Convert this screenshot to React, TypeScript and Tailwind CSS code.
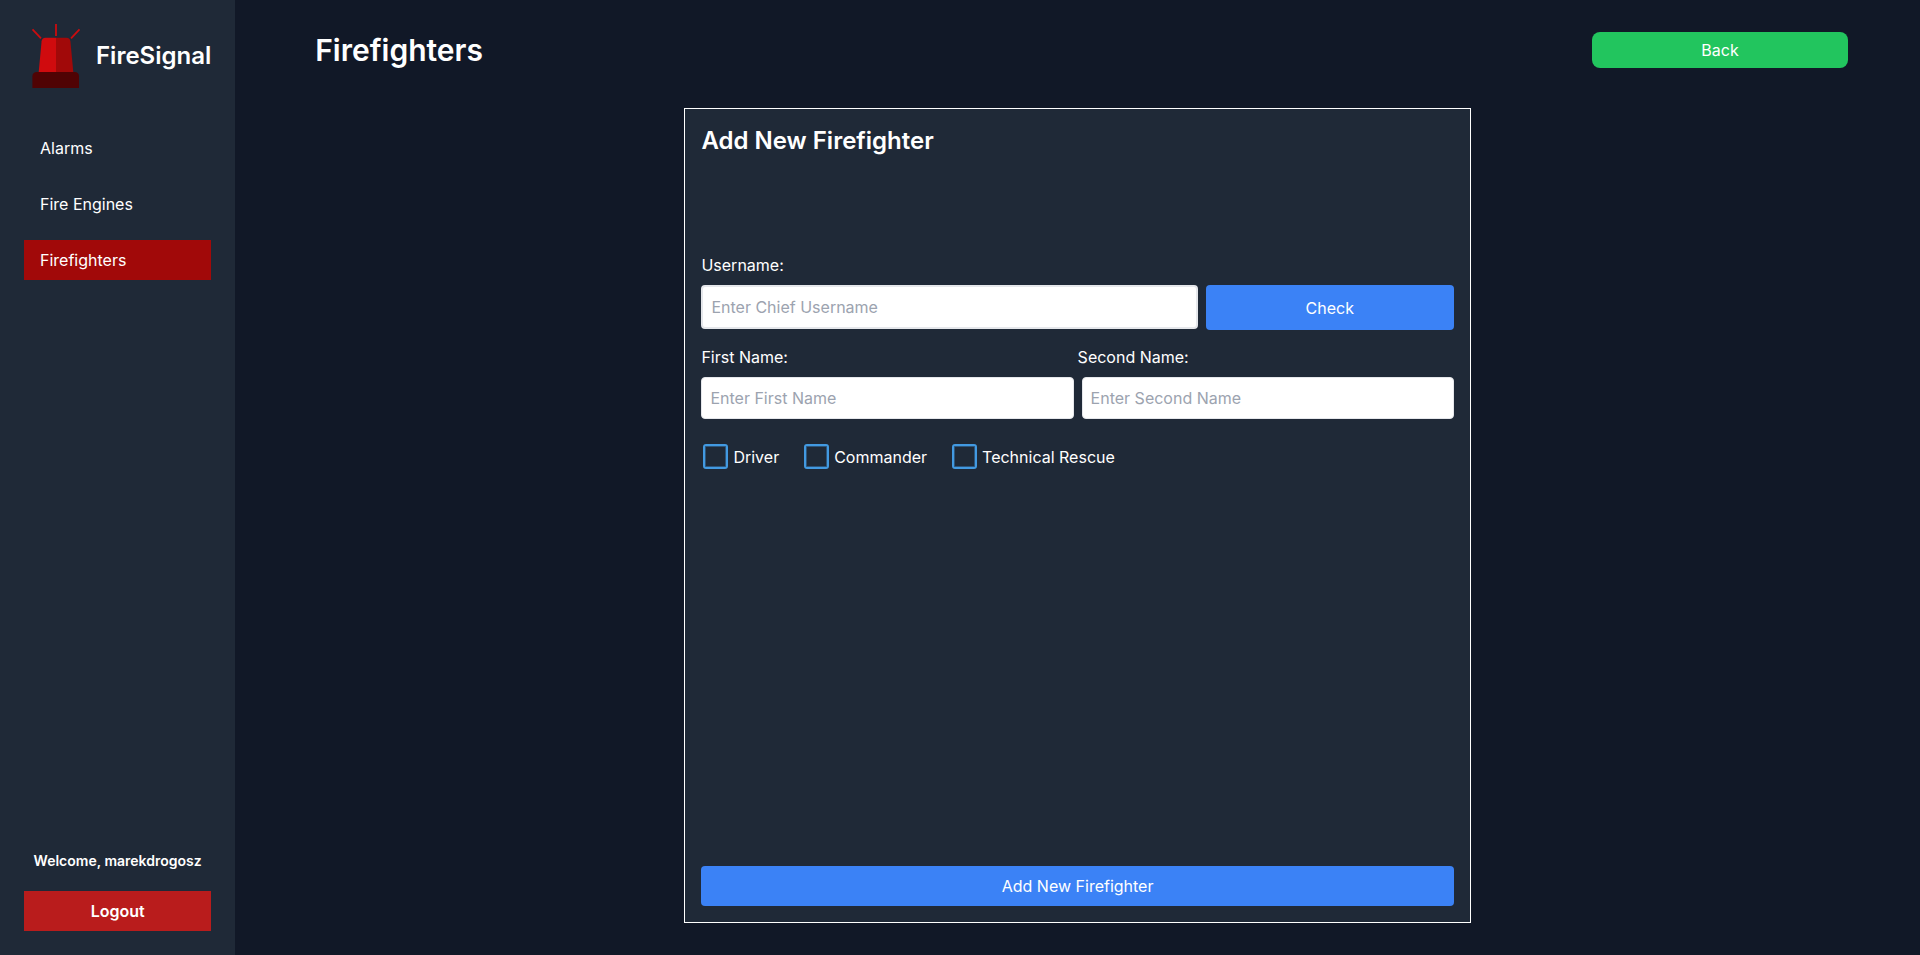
import { useState } from "react";

const navItems = ["Alarms", "Fire Engines", "Firefighters"];
const skills = ["Driver", "Commander", "Technical Rescue"];

function Beacon() {
  return (
    <svg viewBox="0 0 64 64" className="size-16 shrink-0" aria-hidden="true">
      <g stroke="#cc0c0f" strokeWidth="1.8" fill="none">
        <path d="M32 0V12" />
        <path d="M8.500 5.300L17 14.300" />
        <path d="M55.500 5.300L47 14.300" />
      </g>
      <path d="M32 13.700H21.500Q18 13.700 17.600 17.200L14.700 48H32Z" fill="#d00b0e" />
      <path d="M32 13.700H42.500Q46 13.700 46.400 17.200L49.300 48H32Z" fill="#a10909" />
      <path d="M8.400 64V52.500Q8.400 48 13 48H50.500Q55 48 55 52.500V64Z" fill="#500304" />
    </svg>
  );
}

function Sidebar() {
  return (
    <aside className="flex shrink-0 flex-col bg-[#1f2937] p-6">
      <div className="mb-10 flex items-center gap-2">
        <Beacon />
        <span className="text-2xl font-semibold">FireSignal</span>
      </div>
      <nav className="flex flex-col gap-4">
        {navItems.map((item) => (
          <a
            key={item}
            href="#"
            className={item === "Firefighters" ? "bg-[#a10909] px-4 py-2" : "px-4 py-2"}
          >
            {item}
          </a>
        ))}
      </nav>
      <div className="mt-auto flex flex-col gap-5">
        <p className="text-center text-sm font-semibold">Welcome, marekdrogosz</p>
        <button type="button" className="bg-[#b91c1c] py-2 font-semibold">
          Logout
        </button>
      </div>
    </aside>
  );
}

function FirefighterForm() {
  const [checked, setChecked] = useState<string[]>([]);
  const toggle = (skill: string) =>
    setChecked((list) => (list.includes(skill) ? list.filter((s) => s !== skill) : [...list, skill]));

  return (
    <form
      onSubmit={(e) => e.preventDefault()}
      className="mx-auto flex w-1/2 grow flex-col border border-white bg-[#1f2937] p-4"
    >
      <h2 className="mb-24 text-2xl font-semibold">Add New Firefighter</h2>

      <label htmlFor="username" className="mb-2">Username:</label>
      <div className="grid grid-cols-[2fr_1fr] items-start gap-2">
        <input
          id="username"
          type="text"
          placeholder="Enter Chief Username"
          className="h-11 min-w-0 rounded border-2 border-[#e5e7eb] bg-white px-2 text-black placeholder:text-[#9ca3af]"
        />
        <button type="button" className="h-[45px] rounded bg-[#3b82f6]">Check</button>
      </div>

      <div className="mt-[15px] mb-2 grid grid-cols-2">
        <label htmlFor="first-name">First Name:</label>
        <label htmlFor="second-name">Second Name:</label>
      </div>
      <div className="grid grid-cols-2 gap-2">
        <input
          id="first-name"
          type="text"
          placeholder="Enter First Name"
          className="h-[42px] min-w-0 rounded border border-[#e5e7eb] bg-white px-2 text-black placeholder:text-[#9ca3af]"
        />
        <input
          id="second-name"
          type="text"
          placeholder="Enter Second Name"
          className="h-[42px] min-w-0 rounded border border-[#e5e7eb] bg-white px-2 text-black placeholder:text-[#9ca3af]"
        />
      </div>

      <div className="mt-[25px] flex gap-[25px] pl-0.5">
        {skills.map((skill) => (
          <label key={skill} className="flex items-center gap-[5px]">
            <input
              type="checkbox"
              checked={checked.includes(skill)}
              onChange={() => toggle(skill)}
              className="size-[25px] appearance-none rounded-[3px] border-2 border-[#4299e1] inset-ring-1 inset-ring-[#4299e1]/40 checked:bg-[#4299e1]"
            />
            {skill}
          </label>
        ))}
      </div>

      <button type="submit" className="mt-auto rounded bg-[#3b82f6] py-2">
        Add New Firefighter
      </button>
    </form>
  );
}

export default function App() {
  return (
    <div className="flex min-h-screen bg-[#111827] font-[Inter,sans-serif] text-base text-white">
      <Sidebar />
      <main className="flex grow flex-col px-14 py-8">
        <header className="mb-10 flex items-center justify-between pr-4 pl-6">
          <h1 className="text-3xl font-semibold">Firefighters</h1>
          <button type="button" className="h-9 w-64 rounded-lg bg-[#22c55e]">Back</button>
        </header>
        <FirefighterForm />
      </main>
    </div>
  );
}
